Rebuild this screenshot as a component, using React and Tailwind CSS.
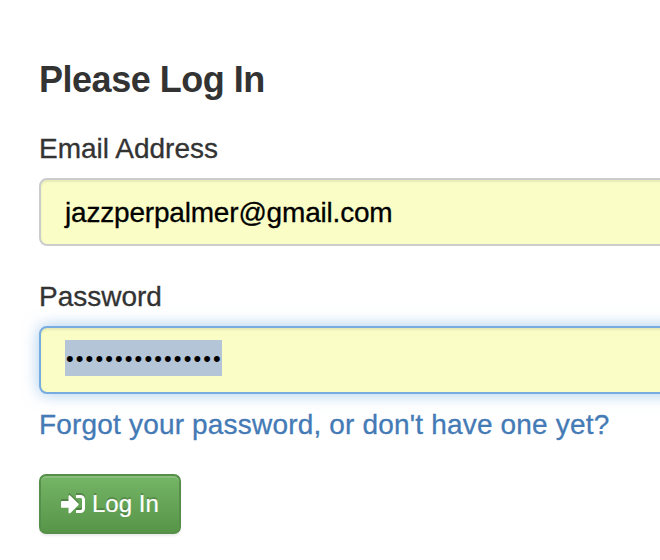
import React from 'react';
import { FaSignInAlt } from 'react-icons/fa';

const labelClass = 'block text-[28px] leading-[40px] text-[#333] [-webkit-text-stroke:0.3px]';

const App = () => {
    return (
        <div className="h-[560px] w-[660px] overflow-hidden bg-white pl-[39px] pt-[58px] font-['Liberation_Sans',Arial,sans-serif] text-[#333]">
            <form className="w-[700px]" onSubmit={(e) => e.preventDefault()}>
                <h1 className="text-[36px] font-bold leading-[44px] tracking-[-0.48px]">
                    Please Log In
                </h1>
                <div className="mt-[27px]">
                    <label className={labelClass}>Email Address</label>
                    <div className="mt-[9px] flex h-[68px] items-center rounded-[8px] border-2 border-[#ccc] bg-[#fafdc5] px-6 pt-[2px] text-[28px] tracking-[-0.19px] text-black shadow-[inset_0_2px_2px_rgba(0,0,0,0.075)] [-webkit-text-stroke:0.3px]">
                        jazzperpalmer@gmail.com
                    </div>
                </div>
                <div className="mt-[31px]">
                    <label className={labelClass}>Password</label>
                    <div className="mt-[9px] flex h-[68px] items-start rounded-[8px] border-2 border-[#76acdf] bg-[#fafdc5] px-6 pt-[12px] shadow-[inset_0_2px_2px_rgba(0,0,0,0.075),0_0_16px_rgba(102,165,225,0.6)]">
                        <span className="h-[36px] w-[157px] whitespace-nowrap bg-[#b4c5d7] pl-[1px] pt-px text-[22px] leading-[36px] tracking-[2.1px] text-black">
                            {'•'.repeat(16)}
                        </span>
                    </div>
                </div>
                <a className="mt-[11px] block text-[28px] leading-[40px] tracking-[0.18px] text-[#447ab5] [-webkit-text-stroke:0.3px]">
                    Forgot your password, or don't have one yet?
                </a>
                <button className="mt-[29px] flex h-[60px] w-[142px] items-center gap-[7px] rounded-[7px] border-2 border-[#568f49] bg-linear-to-b from-[#75b566] to-[#579548] pl-5 text-[24px] text-white shadow-[inset_0_2px_0_rgba(255,255,255,0.15),0_2px_2px_rgba(0,0,0,0.075)] [-webkit-text-stroke:0.2px] [text-shadow:0_-2px_0_rgba(0,0,0,0.2)]">
                    <FaSignInAlt className="size-6 drop-shadow-[0_-2px_0_rgba(0,0,0,0.2)]" />
                    Log In
                </button>
            </form>
        </div>
    );
};

export default App;
